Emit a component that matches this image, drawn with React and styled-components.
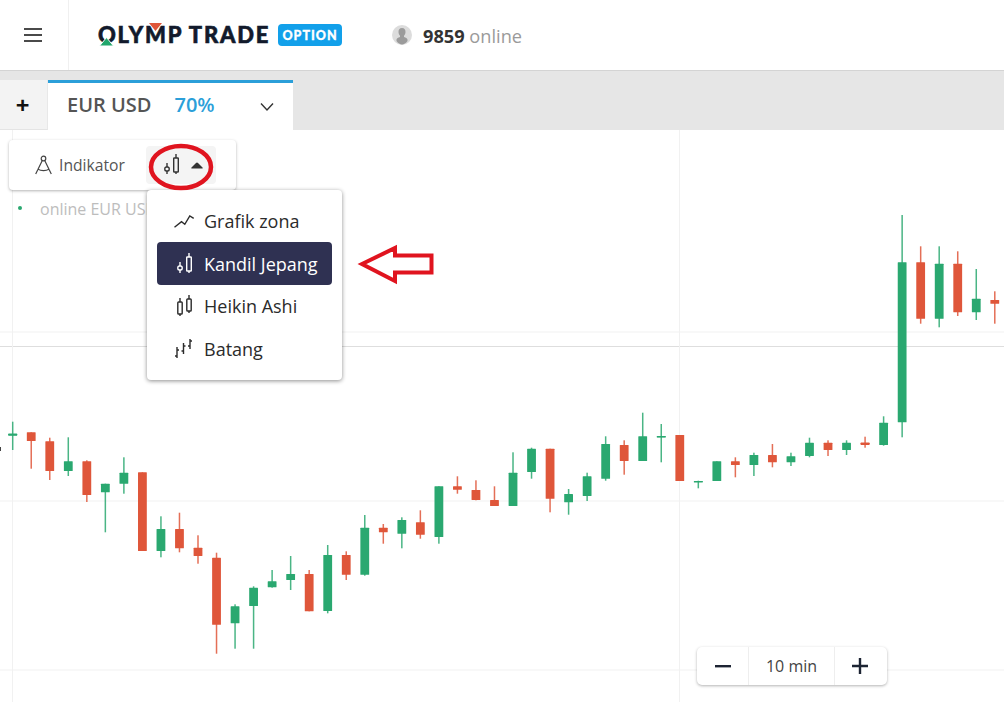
import React from "react";
import styled, { createGlobalStyle } from "styled-components";

const GlobalStyle = createGlobalStyle`
  html, body {
    margin: 0;
    padding: 0;
    background: #fff;
    overflow: hidden;
  }
  body {
    font-family: "Open Sans", "Noto Sans", sans-serif;
    color: #333;
  }
  * { box-sizing: border-box; }
`;

const Page = styled.div`
  width: 1004px;
  height: 702px;
  display: flex;
  flex-direction: column;
  overflow: hidden;
`;

const Header = styled.header`
  height: 71px;
  flex: none;
  display: flex;
  align-items: center;
  border-bottom: 1px solid #d4d4d4;
`;

const BurgerCell = styled.div`
  width: 69px;
  height: 100%;
  display: flex;
  flex-direction: column;
  justify-content: center;
  gap: 4px;
  padding-left: 24px;
  border-right: 1px solid #f0f0f0;
  & > span {
    display: block;
    width: 18px;
    height: 2px;
    background: #4a4a4a;
  }
`;

const Logo = styled.div`
  position: relative;
  margin-left: 29px;
  font-family: "Lato", sans-serif;
  font-weight: 900;
  font-size: 22px;
  line-height: 26px;
  letter-spacing: 1.75px;
  color: #121a2c;
  -webkit-text-stroke: 0.6px #121a2c;
  white-space: nowrap;
`;

const LogoMark = styled.svg`
  position: absolute;
  left: ${(p) => p.$left}px;
  top: ${(p) => p.$top}px;
`;

const Badge = styled.div`
  margin-left: 8px;
  width: 64px;
  height: 22px;
  border-radius: 4px;
  background: #12a0ea;
  color: #fff;
  font-family: "Lato", sans-serif;
  font-weight: 900;
  font-size: 12.5px;
  letter-spacing: 1px;
  -webkit-text-stroke: 0.3px #fff;
  display: flex;
  align-items: center;
  justify-content: center;
`;

const Online = styled.div`
  margin-left: 50px;
  display: flex;
  align-items: center;
  gap: 11px;
  font-size: 18.2px;
  color: #9a9a9a;
  & b {
    font-weight: 700;
    color: #333;
  }
  & > span {
    margin-top: 1px;
  }
`;

const Tabs = styled.div`
  height: 59px;
  flex: none;
  padding-top: 9px;
  background: #e6e6e6;
  display: flex;
`;

const AddTab = styled.div`
  width: 48px;
  padding-right: 2px;
  background: #f3f3f3;
  border-right: 1px solid #e8e8e8;
  border-bottom: 1px solid #e4e4e4;
  display: flex;
  align-items: center;
  justify-content: center;
  font-size: 24px;
  font-weight: 700;
  color: #111;
`;

const ActiveTab = styled.div`
  width: 245px;
  background: #fff;
  border-top: 3px solid #2b9fd9;
  padding: 0 18px 4px 19px;
  display: flex;
  align-items: center;
  font-size: 20px;
  font-weight: 600;
  color: #555;
`;

const Pct = styled.span`
  margin-left: 23px;
  color: #2b9fd9;
`;

const TabChevron = styled.svg`
  margin-left: auto;
  margin-top: 4px;
`;

const Stage = styled.main`
  position: relative;
  flex: 1;
  min-height: 0;
`;

const Chart = styled.svg`
  display: block;
`;

const Toolbar = styled.div`
  position: absolute;
  left: 9px;
  top: 10px;
  width: 227px;
  height: 50px;
  background: #fff;
  border-radius: 4px;
  box-shadow: 0 1px 3px rgba(0, 0, 0, 0.3);
  padding: 6px 20px 6px 26px;
  display: flex;
  align-items: center;
  justify-content: space-between;
`;

const Indicator = styled.div`
  display: flex;
  align-items: center;
  gap: 7px;
  font-size: 15.7px;
  color: #555;
`;

const TypeButton = styled.div`
  width: 70px;
  height: 38px;
  border-radius: 4px;
  background: #f4f4f4;
  padding-left: 15px;
  display: flex;
  align-items: center;
  gap: 8px;
`;

const Legend = styled.div`
  position: absolute;
  left: 18px;
  top: 68px;
  display: flex;
  align-items: center;
  gap: 18px;
  font-size: 16px;
  color: #bdbdbd;
  &::before {
    content: "";
    width: 4px;
    height: 4px;
    margin-top: -2px;
    border-radius: 50%;
    background: #2aa870;
  }
`;

const Menu = styled.ul`
  position: absolute;
  left: 147px;
  top: 60px;
  width: 195px;
  height: 190px;
  margin: 0;
  padding: 9.5px 10px;
  list-style: none;
  background: #fff;
  border-radius: 4px;
  box-shadow: 0 1px 4px rgba(0, 0, 0, 0.45);
`;

const MenuItem = styled.li`
  height: 42.7px;
  padding-left: 17px;
  border-radius: 4px;
  display: flex;
  align-items: center;
  gap: 9px;
  font-size: 18px;
  color: ${(p) => (p.$active ? "#fff" : "#2b2b2b")};
  background: ${(p) => (p.$active ? "#2f3152" : "transparent")};
`;

const MenuIcon = styled.svg`
  flex: none;
  fill: none;
  stroke: currentColor;
  stroke-width: 1.4;
`;

const Zoom = styled.div`
  position: absolute;
  left: 697px;
  top: 517px;
  width: 190px;
  height: 38px;
  background: #fff;
  border-radius: 5px;
  box-shadow: 0 1px 3px rgba(0, 0, 0, 0.3);
  display: grid;
  grid-template-columns: 51px 87px 50px;
  align-items: center;
`;

const ZoomCell = styled.div`
  height: 100%;
  display: flex;
  align-items: center;
  justify-content: center;
  font-size: 16px;
  color: #444;
  border-left: ${(p) => (p.$line ? "1px solid #eee" : "none")};
  border-right: ${(p) => (p.$line ? "1px solid #eee" : "none")};
`;

const Annotation = styled.svg`
  position: absolute;
  left: 0;
  top: 0;
  pointer-events: none;
`;

const GREEN = "#2aa870";
const RED = "#df563a";

// body top, body bottom, wick top, wick bottom, up?
const candles = [
  [433.7, 435.7, 421.7, 450, 1],
  [432.3, 441, 432.3, 468.7, 0],
  [441.3, 471, 437.7, 480, 0],
  [461.3, 471, 437.3, 476, 1],
  [461.3, 495, 460.3, 502, 0],
  [483.7, 492.3, 483.7, 532.3, 1],
  [472.7, 483.7, 457.3, 493.7, 1],
  [472.3, 551, 472.3, 551, 0],
  [529, 551, 516.3, 557.3, 1],
  [529, 548.3, 512.7, 552.3, 0],
  [547.7, 556, 535.3, 563.7, 0],
  [557.7, 624.7, 552.7, 653.7, 0],
  [606.3, 623.3, 604.3, 648.7, 1],
  [587.7, 606, 586.3, 648.7, 1],
  [581.3, 587.3, 570, 587.7, 1],
  [574, 580, 556, 590, 1],
  [574, 611.3, 570, 611.3, 0],
  [555, 611, 545, 613.3, 1],
  [555, 574.7, 551.3, 580, 0],
  [527.7, 574.7, 515, 575.7, 1],
  [527.7, 532.3, 524, 543.7, 0],
  [520, 533.7, 517.3, 548.3, 1],
  [522.3, 534.7, 510.3, 538.7, 0],
  [486.3, 537, 486.3, 543.7, 1],
  [486.3, 489.7, 476.3, 493.7, 0],
  [490, 500, 480.3, 500.3, 0],
  [500, 506, 486.3, 506, 0],
  [472.7, 506, 452.3, 506, 1],
  [448.7, 472, 447.7, 478.7, 1],
  [448.7, 498.7, 448.7, 512.3, 0],
  [494, 502.3, 489, 514.7, 1],
  [476.3, 496, 472.7, 501, 1],
  [444, 478.7, 436.3, 480.7, 1],
  [445, 461, 440.3, 474.7, 0],
  [436.3, 461, 412.7, 461, 1],
  [436, 437.3, 424, 462.3, 1],
  [435, 481, 435, 481, 0],
  [481, 482, 480.7, 488.3, 1],
  [461.3, 481, 461.3, 481, 1],
  [461.3, 465, 457.3, 477.3, 0],
  [455, 465, 452.7, 476, 1],
  [455, 462.3, 444, 467.3, 0],
  [456.3, 462.3, 452.7, 466, 1],
  [442.7, 456, 437.7, 457.3, 1],
  [442.7, 450, 440.3, 456, 0],
  [442.7, 450, 440.3, 455, 1],
  [442.7, 445, 436.7, 447.7, 0],
  [422.7, 445, 416.3, 445.7, 1],
  [262.3, 422.3, 215, 437.3, 1],
  [262.3, 318.7, 246.3, 323.7, 0],
  [263.7, 318.7, 246.3, 327.3, 1],
  [263.7, 312.3, 251.3, 316, 0],
  [298.7, 312.3, 269, 320, 1],
  [300, 303.7, 291.3, 323.7, 0],
];

const hLines = [
  { y: 332, color: "#f1f1f1" },
  { y: 346.5, color: "#dedede" },
  { y: 501, color: "#f1f1f1" },
  { y: 670, color: "#f1f1f1" },
];

const PriceChart = () => (
  <Chart width="1004" height="572" viewBox="0 130 1004 572">
    {hLines.map((l) => (
      <line key={l.y} x1="0" x2="1004" y1={l.y} y2={l.y} stroke={l.color} />
    ))}
    <line x1="12.5" x2="12.5" y1="130" y2="702" stroke="#f1f1f1" />
    <line x1="679.5" x2="679.5" y1="130" y2="702" stroke="#f1f1f1" />
    <rect x="0" y="447" width="1" height="4" fill="#444" />
    {candles.map(([top, bottom, wickTop, wickBottom, up], i) => {
      const x = 12.7 + i * 18.53;
      const color = up ? GREEN : RED;
      const doji = bottom - top < 3;
      return (
        <g key={i} fill={color}>
          <rect x={x - 0.75} y={wickTop} width="1.5" height={wickBottom - wickTop} opacity="0.85" />
          <rect x={x - 4.4} y={top} width="8.8" height={bottom - top} rx="0.5" />
          {doji && <rect x={x - 4.4} y={top} width="8.8" height="1.5" />}
        </g>
      );
    })}
  </Chart>
);

// small candle beside a tall one, used on the toolbar and in the menu
const CandleIcon = () => (
  <MenuIcon width="21" height="24" viewBox="0 0 21 24">
    <path d="M15 1v4M15 19v2M6 10v4M6 18v3" />
    <rect x="12.7" y="5" width="4.6" height="14" rx="0.6" />
    <rect x="3.8" y="14" width="4.4" height="4" rx="1.8" />
  </MenuIcon>
);

const App = () => (
  <Page>
    <GlobalStyle />
    <Header>
      <BurgerCell>
        <span />
        <span />
        <span />
      </BurgerCell>
      <Logo>
        OLYMP TRADE
        <LogoMark $left={1} $top={15} width="15" height="9" viewBox="0 0 15 9">
          <path d="M7.5 0.5L14.5 9H0.5z" fill="#21a66b" stroke="#fff" strokeWidth="1" />
        </LogoMark>
        <LogoMark $left={51} $top={1} width="13" height="9" viewBox="0 0 13 9">
          <path d="M0 0h13L6.5 8z" fill="#df563a" />
        </LogoMark>
      </Logo>
      <Badge>OPTION</Badge>
      <Online>
        <svg width="20" height="20" viewBox="0 0 20 20">
          <circle cx="10" cy="10" r="10" fill="#dcdcdc" />
          <path
            d="M10 3c2.4 0 3.7 1.9 3.5 4.2-.1 1.5-.7 2.7-1.5 3.5v1.3c1.8.6 3.3 1.2 3.5 2.5v1.5c-1.5 2.3-3.5 3.4-5.5 3.4s-4-1.1-5.5-3.4v-1.5c.2-1.3 1.7-1.9 3.5-2.5v-1.3c-.8-.8-1.4-2-1.5-3.5C6.3 4.9 7.6 3 10 3z"
            fill="#9b9b9b"
          />
        </svg>
        <span>
          <b>9859</b> online
        </span>
      </Online>
    </Header>
    <Tabs>
      <AddTab>+</AddTab>
      <ActiveTab>
        EUR USD
        <Pct>70%</Pct>
        <TabChevron width="16" height="10" viewBox="0 0 16 10" fill="none" stroke="#333" strokeWidth="1.4">
          <path d="M2 1.5l6 6.5 6-6.5" />
        </TabChevron>
      </ActiveTab>
    </Tabs>
    <Stage>
      <PriceChart />
      <Legend>online EUR USD</Legend>
      <Toolbar>
        <Indicator>
          <svg width="17" height="20" viewBox="0 0 17 20" fill="none" stroke="#444" strokeWidth="1.2">
            <circle cx="8.5" cy="3.5" r="2.3" />
            <path d="M7.3 5.5L0.7 19M9.7 5.5L16.3 19M2.5 14c3.5 2 8.5 2 12 0" />
          </svg>
          Indikator
        </Indicator>
        <TypeButton>
          <CandleIcon />
          <svg width="14" height="7" viewBox="0 0 14 7">
            <path d="M7 0.5c.4 0 .7.2 1 .5l4.500 4.500c.4.400.2 1-.4 1H1.900c-.6 0-.8-.6-.4-1L6 1c.3-.3.6-.5 1-.5z" fill="#333" />
          </svg>
        </TypeButton>
      </Toolbar>
      <Menu>
        <MenuItem>
          <MenuIcon width="21" height="14" viewBox="0 0 21 14">
            <path d="M0.5 13.3L7.5 7.7l3.3 2.6L15.8 2l3.9 2.3" />
          </MenuIcon>
          Grafik zona
        </MenuItem>
        <MenuItem $active>
          <CandleIcon />
          Kandil Jepang
        </MenuItem>
        <MenuItem>
          <MenuIcon width="21" height="24" viewBox="0 0 21 24">
            <path d="M6 4v4M6 20v2M15 1v4M15 17v2" />
            <rect x="3.8" y="8" width="4.4" height="12" rx="0.8" />
            <rect x="12.8" y="5" width="4.4" height="12" rx="0.8" />
          </MenuIcon>
          Heikin Ashi
        </MenuItem>
        <MenuItem>
          <MenuIcon width="21" height="22" viewBox="0 0 21 22">
            <path d="M3 9v11M1 18h2M3 12h2M9.5 5v11M7.5 13h2M9.5 8h2M16 1v10M14 8h2M16 3h2" />
          </MenuIcon>
          Batang
        </MenuItem>
      </Menu>
      <Zoom>
        <ZoomCell>
          <svg width="16" height="3" viewBox="0 0 16 3">
            <rect width="16" height="2.4" fill="#1d2433" />
          </svg>
        </ZoomCell>
        <ZoomCell $line>10 min</ZoomCell>
        <ZoomCell>
          <svg width="16" height="16" viewBox="0 0 16 16">
            <path d="M6.8 0h2.4v6.8H16v2.4H9.2V16H6.8V9.2H0V6.800h6.800z" fill="#1d2433" />
          </svg>
        </ZoomCell>
      </Zoom>
      <Annotation width="1004" height="572" viewBox="0 130 1004 572">
        <ellipse cx="181" cy="167" rx="30" ry="21" fill="none" stroke="#e0141f" strokeWidth="4.5" />
        <path
          d="M362 264L395 248V255.5H431.5V272.5H395V281z"
          fill="#fff"
          stroke="#e0141f"
          strokeWidth="4"
        />
      </Annotation>
    </Stage>
  </Page>
);

export default App;
